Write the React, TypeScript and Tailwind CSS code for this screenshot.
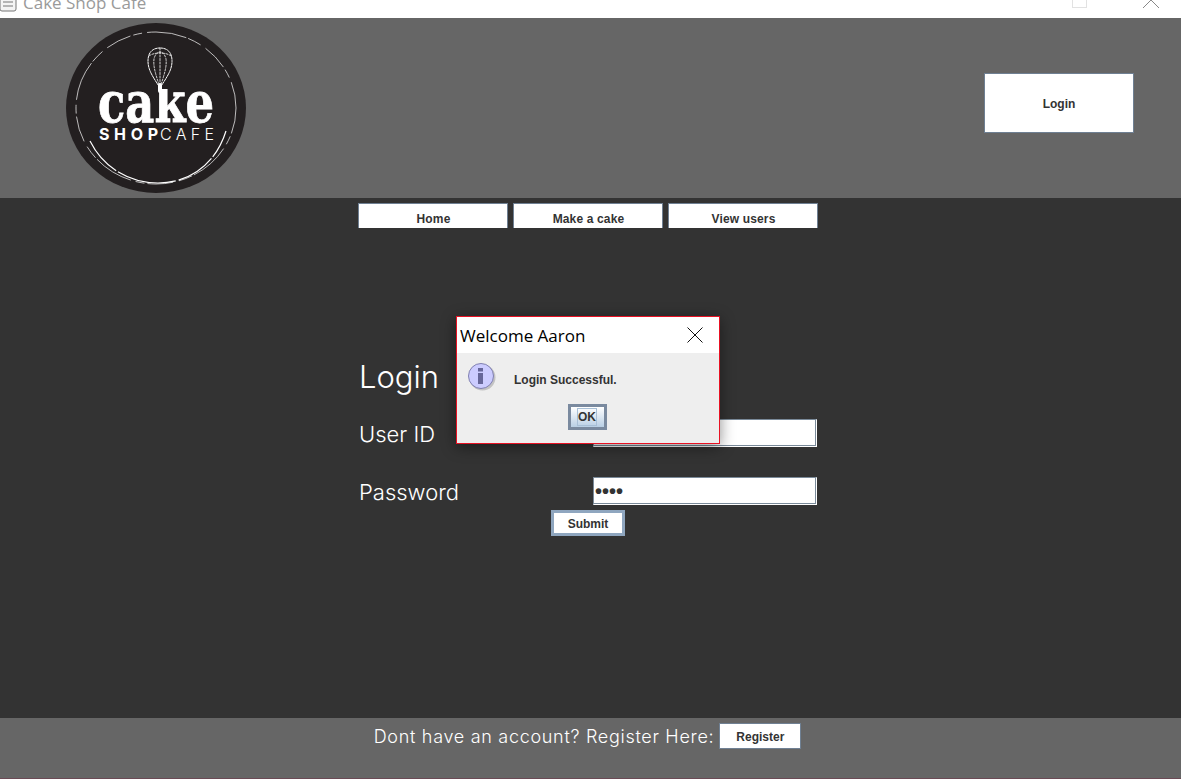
const CakeLogo = () => (
  <svg width="180" height="170" viewBox="0 0 180 170" className="block">
    <defs>
      <clipPath id="cakeClip">
        <rect x="0" y="66" width="180" height="40" />
      </clipPath>
    </defs>
    <ellipse cx="90" cy="85" rx="90" ry="85" fill="#231f20" />
    {/* worn stamp ring */}
    <ellipse cx="90" cy="85" rx="80" ry="76" fill="none" stroke="#fff" strokeWidth="0.7" strokeDasharray="26 3 9 5 40 2 14 6" />
    <path d="M24 118 C40 150 70 160 92 160 C125 160 150 140 160 108" fill="none" stroke="#fff" strokeWidth="1.2" strokeDasharray="40 2 60 3" />
    {/* whisk */}
    <g fill="none" stroke="#fff" strokeLinecap="round">
      <path d="M94 65 C88 55 82 48 82 38 C82 30 86 25 94 25 C102 25 106 30 106 38 C106 48 100 55 94 65Z" strokeWidth="1" strokeDasharray="2 1" />
      <path d="M94 65 C90 52 87 44 88 36 C89 31 92 29 94 29 C96 29 99 31 100 36 C101 44 98 52 94 65Z" strokeWidth="0.8" strokeDasharray="2 1.5" />
      <path d="M83 33 C88 29 100 29 105 33 M94 25 V62" strokeWidth="0.8" strokeDasharray="2 1.5" />
      <path d="M94 62 V68" strokeWidth="4" />
    </g>
    <text x="32" y="99" textLength="116" lengthAdjust="spacingAndGlyphs" clipPath="url(#cakeClip)" fill="#fff" stroke="#fff" strokeWidth="0.8" fontFamily="'DejaVu Serif', serif" fontWeight="700" fontSize="56">
      cake
    </text>
    <text x="33" y="117" textLength="59" fill="#fff" fontFamily="Inter, sans-serif" fontWeight="700" fontSize="16">
      SHOP
    </text>
    <text x="94" y="117" textLength="54" fill="#fff" fontFamily="Inter, sans-serif" fontWeight="300" fontSize="16">
      CAFE
    </text>
  </svg>
);

const InfoIcon = () => (
  <svg width="30" height="30" viewBox="0 0 30 30" className="block">
    <circle cx="15.5" cy="15.5" r="13" fill="#000" opacity="0.18" />
    <circle cx="14" cy="14" r="12.5" fill="#ccccff" stroke="#8080b0" strokeWidth="1" />
    <rect x="11" y="6" width="5" height="3.5" fill="#666699" />
    <rect x="11" y="11" width="5" height="11" fill="#666699" />
  </svg>
);

const navItems = ["Home", "Make a cake", "View users"];

const fields = [
  { label: "User ID", type: "text", value: "" },
  { label: "Password", type: "password", value: "aaaa" },
];

const gothic = "font-['Inter','Lato',sans-serif]";
const btn =
  "bg-white text-[#333] border border-[#6f8093] text-[12px] font-bold font-['Liberation_Sans',Arial,sans-serif]";

export default function App() {
  return (
    <div className="relative h-[779px] w-[1181px] overflow-hidden flex flex-col bg-[#333333]">
      {/* window title, cut off by the top of the screen */}
      <div className="h-[18px] shrink-0 bg-white flex items-start justify-between overflow-hidden">
        <div className="flex items-center gap-[6px] -mt-[7px]">
          <svg width="18" height="18" viewBox="0 0 18 18" className="block -ml-[1px]">
            <rect x="1" y="0" width="16" height="17" rx="2" fill="#f4f4f4" stroke="#777" />
            <path d="M4 8h10M4 12h10" stroke="#777" />
          </svg>
          <span className="text-[17px] leading-[20px] text-[#9a9a9a] font-['Open_Sans',sans-serif]">Cake Shop Cafe</span>
        </div>
        <div className="flex items-start gap-[56px] pr-[22px]">
          <div className="w-[15px] h-[8px] border border-t-0 border-[#e2e2e2]" />
          <svg width="16" height="8" viewBox="0 0 16 8" className="block">
            <path d="M0 8L8 0L16 8" fill="none" stroke="#888" />
          </svg>
        </div>
      </div>

      <header className="h-[180px] shrink-0 bg-[#666666] flex items-center justify-between pl-[66px] pr-[47px]">
        <CakeLogo />
        <button className={`${btn} w-[150px] h-[60px] -mt-[10px] pt-[1px]`}>Login</button>
      </header>

      <main className="relative flex-1 flex flex-col items-center">
        <nav className="flex gap-[5px] pt-[5px] -ml-[6px]">
          {navItems.map((item) => (
            <button key={item} className={`${btn} w-[150px] h-[25px] pt-[6px] pl-[2px] border-b-0 leading-none tracking-[0.15px]`}>
              {item}
            </button>
          ))}
        </nav>

        <div className="w-[458px] mt-[130px] -ml-[5px]">
          <h1 className={`${gothic} text-[31px] leading-[38px] font-light text-white`}>Login</h1>
          <div className="mt-[22px] flex flex-col gap-[28px]">
            {fields.map((f) => (
              <div key={f.label} className="flex items-center justify-between">
                <label className={`${gothic} text-[22px] leading-[28px] pt-[2px] font-light text-white`}>{f.label}</label>
                <input
                  readOnly
                  type={f.type}
                  value={f.value}
                  className="w-[224px] h-[28px] bg-white px-[1px] text-[#333] text-[20px] font-bold font-['Liberation_Sans',Arial,sans-serif] border border-t-[#7a8a99] border-l-[#7a8a99] border-r-white border-b-white shadow-[inset_-1px_-1px_0_#7a8a99] outline-none"
                />
              </div>
            ))}
          </div>
          <div className="mt-[4px] flex justify-center">
            <button className={`${btn} w-[74px] h-[26px] border-[3px] border-[#8fa6bf] pt-[1px]`}>Submit</button>
          </div>
        </div>

        {/* message dialog floating over the form */}
        <div className="absolute left-[456px] top-[118px] w-[264px] h-[128px] border border-[#e81123] bg-[#eeeeee] shadow-[0_3px_14px_rgba(0,0,0,0.45)] flex flex-col">
          <div className="h-[36px] shrink-0 bg-white flex items-center justify-between pl-[3px] pr-[16px]">
            <span className="text-[17px] leading-[36px] pt-[1px] text-black font-['Open_Sans',sans-serif]">Welcome Aaron</span>
            <svg width="16" height="16" viewBox="0 0 16 16" className="block">
              <path d="M0.5 0.5L15.5 15.5M15.5 0.5L0.5 15.5" stroke="#111" strokeWidth="1" />
            </svg>
          </div>
          <div className="flex-1 flex flex-col items-center">
            <div className="w-full flex items-center pl-[10px] pt-[9px] gap-[17px]">
              <InfoIcon />
              <span className="text-[12px] font-bold text-[#333] font-['Liberation_Sans',Arial,sans-serif] pt-[6px]">
                Login Successful.
              </span>
            </div>
            <button className="mt-[12px] -ml-[2px] w-[39px] h-[26px] border-[3px] border-[#7a8a9f] bg-gradient-to-b from-white to-[#b9cfe4] flex items-center justify-center">
              <span className="border border-[#a8bfd6] leading-[16px] text-[12px] font-bold text-[#333] font-['Liberation_Sans',Arial,sans-serif]">
                OK
              </span>
            </button>
          </div>
        </div>
      </main>

      <footer className="h-[61px] shrink-0 bg-[#666666] border-b border-[#6b4a55] flex justify-center items-start pt-[5px] gap-[5px] pr-[6px]">
        <span className={`${gothic} text-[18px] leading-[28px] tracking-[0.7px] font-light text-white`}>Dont have an account? Register Here:</span>
        <button className={`${btn} w-[82px] h-[26px] pt-[1px]`}>Register</button>
      </footer>
    </div>
  );
}
